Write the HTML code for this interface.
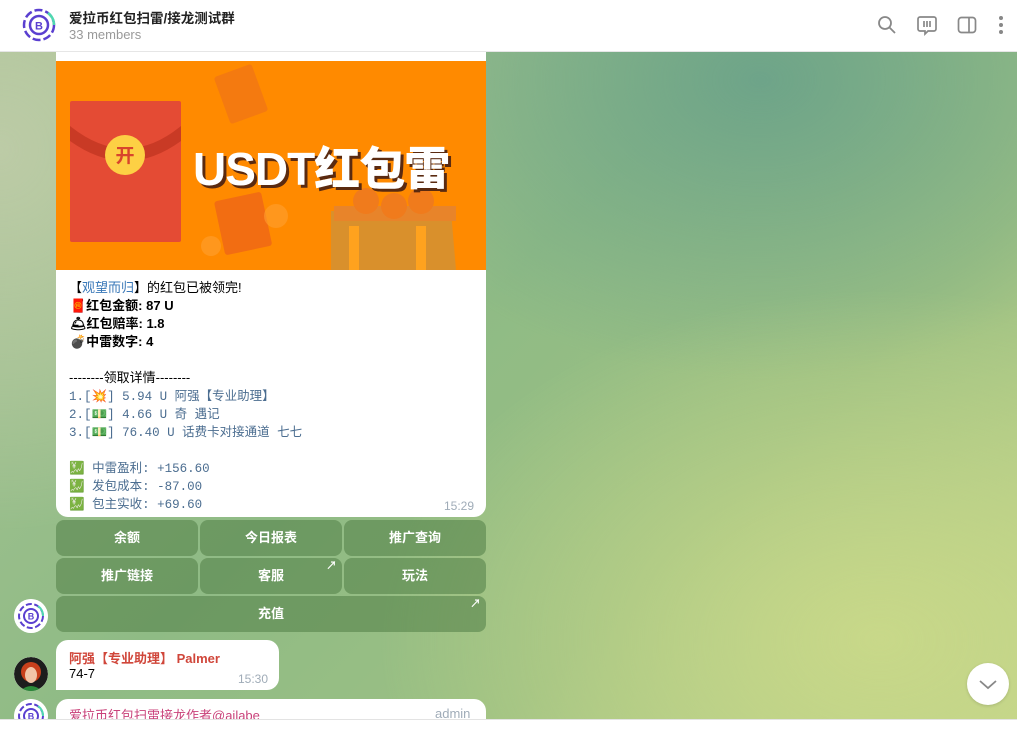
<!DOCTYPE html>
<html><head><meta charset="utf-8">
<style>
*{margin:0;padding:0;box-sizing:border-box}
html,body{width:1017px;height:733px;overflow:hidden}
body{position:relative;font-family:"Liberation Sans","Noto Sans CJK SC",sans-serif;
background:
radial-gradient(ellipse 500px 350px at 880px 640px,#c8d889 0%,rgba(200,216,137,0) 100%),
radial-gradient(ellipse 420px 300px at 760px 80px,#6ea489 0%,rgba(110,164,137,0) 100%),
radial-gradient(ellipse 360px 380px at 0px 150px,#bccba6 0%,rgba(188,203,166,0) 100%),
linear-gradient(135deg,#a9c395 0%,#8fbb85 45%,#9cc083 70%,#c2d48a 100%);}
.hdr{position:absolute;left:0;top:0;width:1017px;height:52px;background:#fff;border-bottom:1px solid #e6e6e6;z-index:5}
.title{position:absolute;left:69px;top:7px;font-size:13.5px;font-weight:bold;color:#222}
.sub{position:absolute;left:69px;top:27px;font-size:13px;color:#999}
.av{position:absolute;width:34px;height:34px;border-radius:50%;background:#fff;overflow:hidden}
.bubble{position:absolute;background:#fff;border-radius:12px}
.ln{position:absolute;left:69px;font-size:13px;color:#000;white-space:nowrap}
.mono{font-family:"Liberation Mono","Noto Sans CJK SC",monospace;color:#4b6d90;font-size:12.5px}
.btn{position:absolute;height:36px;background:rgba(80,125,70,.55);border-radius:8px;color:#fff;font-size:13px;font-weight:bold;text-align:center;line-height:36px}
.arr{position:absolute;right:5px;top:2px;font-size:11px;font-weight:bold;line-height:12px}
.time{position:absolute;font-size:12px;color:#a0acb8}
</style></head><body>
<div class="hdr">
 <svg style="position:absolute;left:22px;top:8px" width="34" height="34" viewBox="0 0 34 34"><circle cx="17" cy="17" r="15" fill="none" stroke="#5a3fd0" stroke-width="2.5" stroke-dasharray="8 3"/><path d="M26 5 A15 15 0 0 1 32 17" stroke="#4fd8b0" stroke-width="2.5" fill="none"/><circle cx="17" cy="17" r="9" fill="none" stroke="#5a3fd0" stroke-width="2.5"/><text x="17" y="21.5" font-size="11" font-weight="bold" text-anchor="middle" fill="#5a3fd0" font-family="Liberation Sans">B</text></svg>
 <div class="title">爱拉币红包扫雷/接龙测试群</div>
 <div class="sub">33 members</div>
 <svg style="position:absolute;left:877px;top:15px" width="20" height="20" viewBox="0 0 20 20" fill="none" stroke="#888" stroke-width="1.8"><circle cx="8" cy="8" r="6"/><path d="M12.5 12.5L18 18"/></svg>
 <svg style="position:absolute;left:916px;top:15px" width="22" height="22" viewBox="0 0 22 22" fill="none" stroke="#888" stroke-width="1.7"><path d="M4 2h14a2 2 0 0 1 2 2v10a2 2 0 0 1-2 2h-6l-3 3v-3H4a2 2 0 0 1-2-2V4a2 2 0 0 1 2-2z"/><path d="M8 6v6M11 6v6M14 6v6"/></svg>
 <svg style="position:absolute;left:957px;top:16px" width="20" height="18" viewBox="0 0 20 18" fill="none" stroke="#888" stroke-width="1.7"><rect x="1.5" y="1.5" width="17" height="15" rx="3"/><path d="M12 2v14"/></svg>
 <svg style="position:absolute;left:997px;top:15px" width="8" height="20" viewBox="0 0 8 20" fill="#888"><circle cx="4" cy="3" r="2"/><circle cx="4" cy="10" r="2"/><circle cx="4" cy="17" r="2"/></svg>
</div>

<div class="bubble" style="left:56px;top:30px;width:430px;height:487px;border-radius:0 0 12px 12px"></div>
<div style="position:absolute;left:56px;top:61px;width:430px;height:209px;background:#ff8a00;overflow:hidden">
 <svg width="430" height="209" viewBox="0 0 430 209">
  <rect x="165" y="8" width="40" height="50" rx="3" fill="#f47a10" transform="rotate(-20 185 33)"/>
  <rect x="163" y="135" width="48" height="55" rx="3" fill="#f26d12" transform="rotate(-12 187 162)"/>
  <circle cx="220" cy="155" r="12" fill="#ffa030" opacity=".6"/>
  <circle cx="155" cy="185" r="10" fill="#ffa030" opacity=".6"/>
  <path d="M275 150 L395 150 L400 209 L275 209Z" fill="#d9902c"/>
  <path d="M278 145 L400 145 L400 160 L278 160Z" fill="#e8842a"/>
  <rect x="293" y="165" width="10" height="44" fill="#ffa21e"/>
  <rect x="360" y="165" width="10" height="44" fill="#ffa21e"/>
  <circle cx="310" cy="140" r="13" fill="#f07b1c"/><circle cx="338" cy="145" r="13" fill="#f07b1c"/><circle cx="365" cy="140" r="13" fill="#f07b1c"/>
  <rect x="14" y="40" width="111" height="141" rx="2" fill="#e44b34"/>
  <path d="M14 65 Q70 110 125 65 L125 80 Q70 120 14 80Z" fill="#c93a25"/>
  <circle cx="69" cy="94" r="20" fill="#fdd044"/>
  <text x="69" y="101" font-size="19" font-weight="bold" text-anchor="middle" fill="#d8452c" font-family="Noto Sans CJK SC">开</text>
  <text x="137" y="124" font-size="46" font-weight="900" fill="#5a2a10" font-family="Liberation Sans, Noto Sans CJK SC" transform="translate(3 3)" style="letter-spacing:-1px">USDT红包雷</text>
  <text x="137" y="124" font-size="46" font-weight="900" fill="#fff" font-family="Liberation Sans, Noto Sans CJK SC" style="letter-spacing:-1px">USDT红包雷</text>
 </svg>
</div>
<div class="ln" style="left:69px;top:277px">【<span style="color:#3a78b8">观望而归</span>】的红包已被领完!</div>
<div class="ln" style="left:70px;top:295px;font-weight:bold">🧧红包金额: 87 U</div>
<div class="ln" style="left:70px;top:313px;font-weight:bold">🛎红包赔率: 1.8</div>
<div class="ln" style="left:70px;top:331px;font-weight:bold">💣中雷数字: 4</div>
<div class="ln" style="left:69px;top:367px">--------领取详情--------</div>
<div class="ln mono" style="top:385px">1.[💥] 5.94 U 阿强【专业助理】</div>
<div class="ln mono" style="top:403px">2.[💵] 4.66 U 奇 遇记</div>
<div class="ln mono" style="top:421px">3.[💵] 76.40 U 话费卡对接通道 七七</div>
<div class="ln mono" style="top:457px">💹 中雷盈利: +156.60</div>
<div class="ln mono" style="top:475px">💹 发包成本: -87.00</div>
<div class="ln mono" style="top:493px">💹 包主实收: +69.60</div>
<div class="time" style="left:444px;top:499px">15:29</div>

<div class="hdr" style="z-index:4"></div>

<div class="btn" style="left:56px;top:520px;width:142px">余额</div>
<div class="btn" style="left:200px;top:520px;width:142px">今日报表</div>
<div class="btn" style="left:344px;top:520px;width:142px">推广查询</div>
<div class="btn" style="left:56px;top:558px;width:142px">推广链接</div>
<div class="btn" style="left:200px;top:558px;width:142px">客服<span class="arr">↗</span></div>
<div class="btn" style="left:344px;top:558px;width:142px">玩法</div>
<div class="btn" style="left:56px;top:596px;width:430px">充值<span class="arr">↗</span></div>

<svg class="av" style="left:14px;top:599px" width="34" height="34" viewBox="0 0 34 34"><circle cx="17" cy="17" r="17" fill="#fff"/><circle cx="17" cy="17" r="12" fill="none" stroke="#5a3fd0" stroke-width="2" stroke-dasharray="6 2.5"/><path d="M24 7 A12 12 0 0 1 29 17" stroke="#4fd8b0" stroke-width="2" fill="none"/><circle cx="17" cy="17" r="7" fill="none" stroke="#5a3fd0" stroke-width="2"/><text x="17" y="20.5" font-size="9" font-weight="bold" text-anchor="middle" fill="#5a3fd0">B</text></svg>

<div class="bubble" style="left:56px;top:640px;width:223px;height:50px;border-bottom-left-radius:0"></div>
<div class="ln" style="top:648px;color:#d0463a;font-weight:bold">阿强【专业助理】 Palmer</div>
<div class="ln" style="top:666px">74-7</div>
<div class="time" style="left:238px;top:672px">15:30</div>
<svg class="av" style="left:14px;top:657px" width="34" height="34" viewBox="0 0 34 34"><circle cx="17" cy="17" r="17" fill="#1d1d1d"/><circle cx="17" cy="15" r="10" fill="#c8401c"/><ellipse cx="17" cy="18" rx="6" ry="8" fill="#f2c5a8"/><path d="M6 34 Q17 24 28 34Z" fill="#2d8a3a"/></svg>

<div class="bubble" style="left:56px;top:699px;width:430px;height:40px"></div>
<div class="ln" style="top:705px;color:#c9427a">爱拉币红包扫雷接龙作者@ailabe</div>
<div class="time" style="left:435px;top:706px;font-size:13px">admin</div>
<svg class="av" style="left:14px;top:699px" width="34" height="34" viewBox="0 0 34 34"><circle cx="17" cy="17" r="17" fill="#fff"/><circle cx="17" cy="17" r="12" fill="none" stroke="#5a3fd0" stroke-width="2" stroke-dasharray="6 2.5"/><path d="M24 7 A12 12 0 0 1 29 17" stroke="#4fd8b0" stroke-width="2" fill="none"/><circle cx="17" cy="17" r="7" fill="none" stroke="#5a3fd0" stroke-width="2"/><text x="17" y="20.5" font-size="9" font-weight="bold" text-anchor="middle" fill="#5a3fd0">B</text></svg>

<div style="position:absolute;left:0;top:719px;width:1017px;height:14px;background:#fff;border-top:1px solid #e3e3e3"></div>
<div style="position:absolute;left:967px;top:663px;width:42px;height:42px;border-radius:50%;background:#fff;box-shadow:0 1px 3px rgba(0,0,0,.15)">
 <svg width="42" height="42" viewBox="0 0 42 42"><path d="M13 18l8 7 8-7" fill="none" stroke="#888" stroke-width="1.8"/></svg>
</div>
</body></html>
